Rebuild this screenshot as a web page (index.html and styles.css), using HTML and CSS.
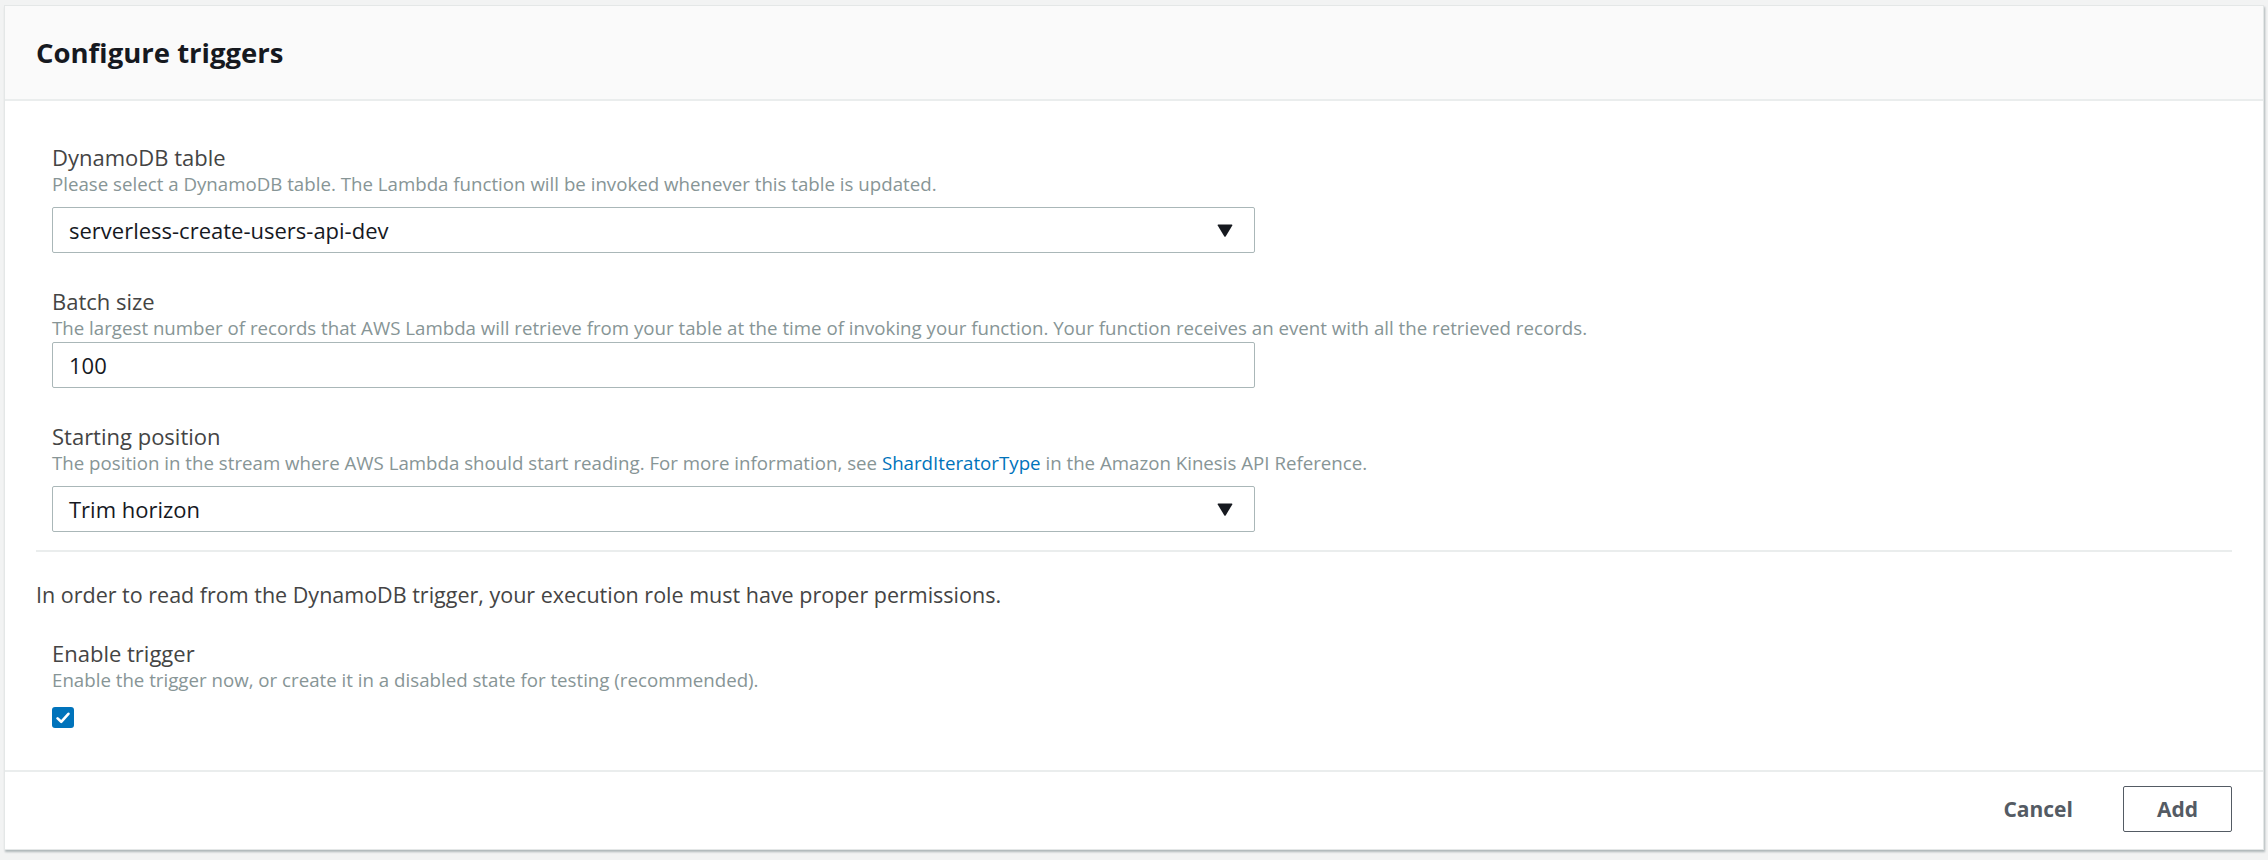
FILE: index.html
```html
<!DOCTYPE html>
<html lang="en">
<head>
<meta charset="utf-8">
<title>Configure triggers</title>
<link rel="stylesheet" href="styles.css">
</head>
<body>
<div class="panel">
  <div class="panel-header">
    <h2 class="panel-title">Configure triggers</h2>
  </div>
  <div class="panel-body">
    <div class="field">
      <div class="field-label">DynamoDB table</div>
      <div class="field-help">Please select a DynamoDB table. The Lambda function will be invoked whenever this table is updated.</div>
      <div class="control select">
        <span class="control-value">serverless-create-users-api-dev</span>
        <svg class="caret" width="16" height="13" viewBox="0 0 16 13"><path d="M1.2 0.5 H14.8 Q15.8 0.5 15.3 1.4 L8.8 12.2 Q8 13.3 7.2 12.2 L0.7 1.4 Q0.2 0.5 1.2 0.5 Z" fill="#16191f"/></svg>
      </div>
    </div>
    <div class="field">
      <div class="field-label">Batch size</div>
      <div class="field-help">The largest number of records that AWS Lambda will retrieve from your table at the time of invoking your function. Your function receives an event with all the retrieved records.</div>
      <div class="control input">
        <span class="control-value">100</span>
      </div>
    </div>
    <div class="field">
      <div class="field-label">Starting position</div>
      <div class="field-help">The position in the stream where AWS Lambda should start reading. For more information, see <a class="link" href="#">ShardIteratorType</a> in the Amazon Kinesis API Reference.</div>
      <div class="control select">
        <span class="control-value">Trim horizon</span>
        <svg class="caret" width="16" height="13" viewBox="0 0 16 13"><path d="M1.2 0.5 H14.8 Q15.8 0.5 15.3 1.4 L8.8 12.2 Q8 13.3 7.2 12.2 L0.7 1.4 Q0.2 0.5 1.2 0.5 Z" fill="#16191f"/></svg>
      </div>
    </div>
    <div class="divider"></div>
    <p class="notice">In order to read from the DynamoDB trigger, your execution role must have proper permissions.</p>
    <div class="field field-check">
      <div class="field-label">Enable trigger</div>
      <div class="field-help">Enable the trigger now, or create it in a disabled state for testing (recommended).</div>
      <div class="checkbox">
        <svg width="14" height="12" viewBox="0 0 14 12"><path d="M1.6 6.4 L5.2 9.8 L12.4 1.8" fill="none" stroke="#ffffff" stroke-width="2.6" stroke-linecap="round" stroke-linejoin="round"/></svg>
      </div>
    </div>
  </div>
  <div class="panel-footer">
    <button class="btn btn-link" type="button">Cancel</button>
    <button class="btn btn-outline" type="button">Add</button>
  </div>
</div>
</body>
</html>
```
FILE: styles.css
```css
* {
  box-sizing: border-box;
}

html, body {
  margin: 0;
  padding: 0;
  background: #f2f3f3;
}

body {
  font-family: "Open Sans", "Liberation Sans", sans-serif;
  color: #444444;
  padding: 5px 4px 0 4px;
  height: 860px;
  overflow: hidden;
}

.panel {
  background: #ffffff;
  border: 1px solid #e4e7e7;
  box-shadow: 1px 2px 2px rgba(0, 28, 36, 0.28);
}

.panel-header {
  background: #fafafa;
  border-bottom: 2px solid #eaeded;
  padding: 30px 31px 29px 31px;
}

.panel-title {
  margin: 0;
  font-size: 27.5px;
  line-height: 34px;
  font-weight: 700;
  color: #16191f;
}

.panel-body {
  padding: 42px 31px 42px 31px;
}

.field {
  padding-left: 16px;
  margin-bottom: 34px;
}

.field-label {
  font-size: 22px;
  line-height: 28px;
  color: #444444;
}

.field-help {
  margin-top: 2px;
  font-size: 18.7px;
  line-height: 22px;
  color: #879596;
}

.link {
  color: #0073bb;
  text-decoration: none;
}

.control {
  width: 1203px;
  height: 46px;
  border: 1px solid #aab7b8;
  border-radius: 2px;
  display: flex;
  align-items: center;
  justify-content: space-between;
  padding: 0 21px 0 16px;
  font-size: 22px;
  color: #16191f;
}

.select {
  margin-top: 12px;
}

.input {
  margin-top: 3px;
}

.caret {
  display: block;
  flex: none;
}

.divider {
  height: 2px;
  background: #eaeded;
  margin-top: -16px;
}

.notice {
  margin: 29px 0 0 0;
  font-size: 21.5px;
  line-height: 28px;
  color: #444444;
}

.field-check {
  margin-top: 30px;
  margin-bottom: 0;
}

.checkbox {
  margin-top: 16px;
  width: 22px;
  height: 21px;
  border-radius: 3px;
  background: #0073bb;
  display: flex;
  align-items: center;
  justify-content: center;
}

.checkbox svg {
  display: block;
}

.panel-footer {
  border-top: 2px solid #eaeded;
  display: flex;
  justify-content: flex-end;
  align-items: center;
  gap: 25px;
  padding: 14px 31px 17px 31px;
}

.btn {
  font-family: "Open Sans", "Liberation Sans", sans-serif;
  font-size: 21px;
  font-weight: 700;
  color: #545b64;
  height: 46px;
  background: transparent;
  cursor: pointer;
}

.btn-link {
  border: none;
  padding: 0 25px;
}

.btn-outline {
  border: 1px solid #545b64;
  border-radius: 2px;
  padding: 0 33px;
  background: #ffffff;
}
```
